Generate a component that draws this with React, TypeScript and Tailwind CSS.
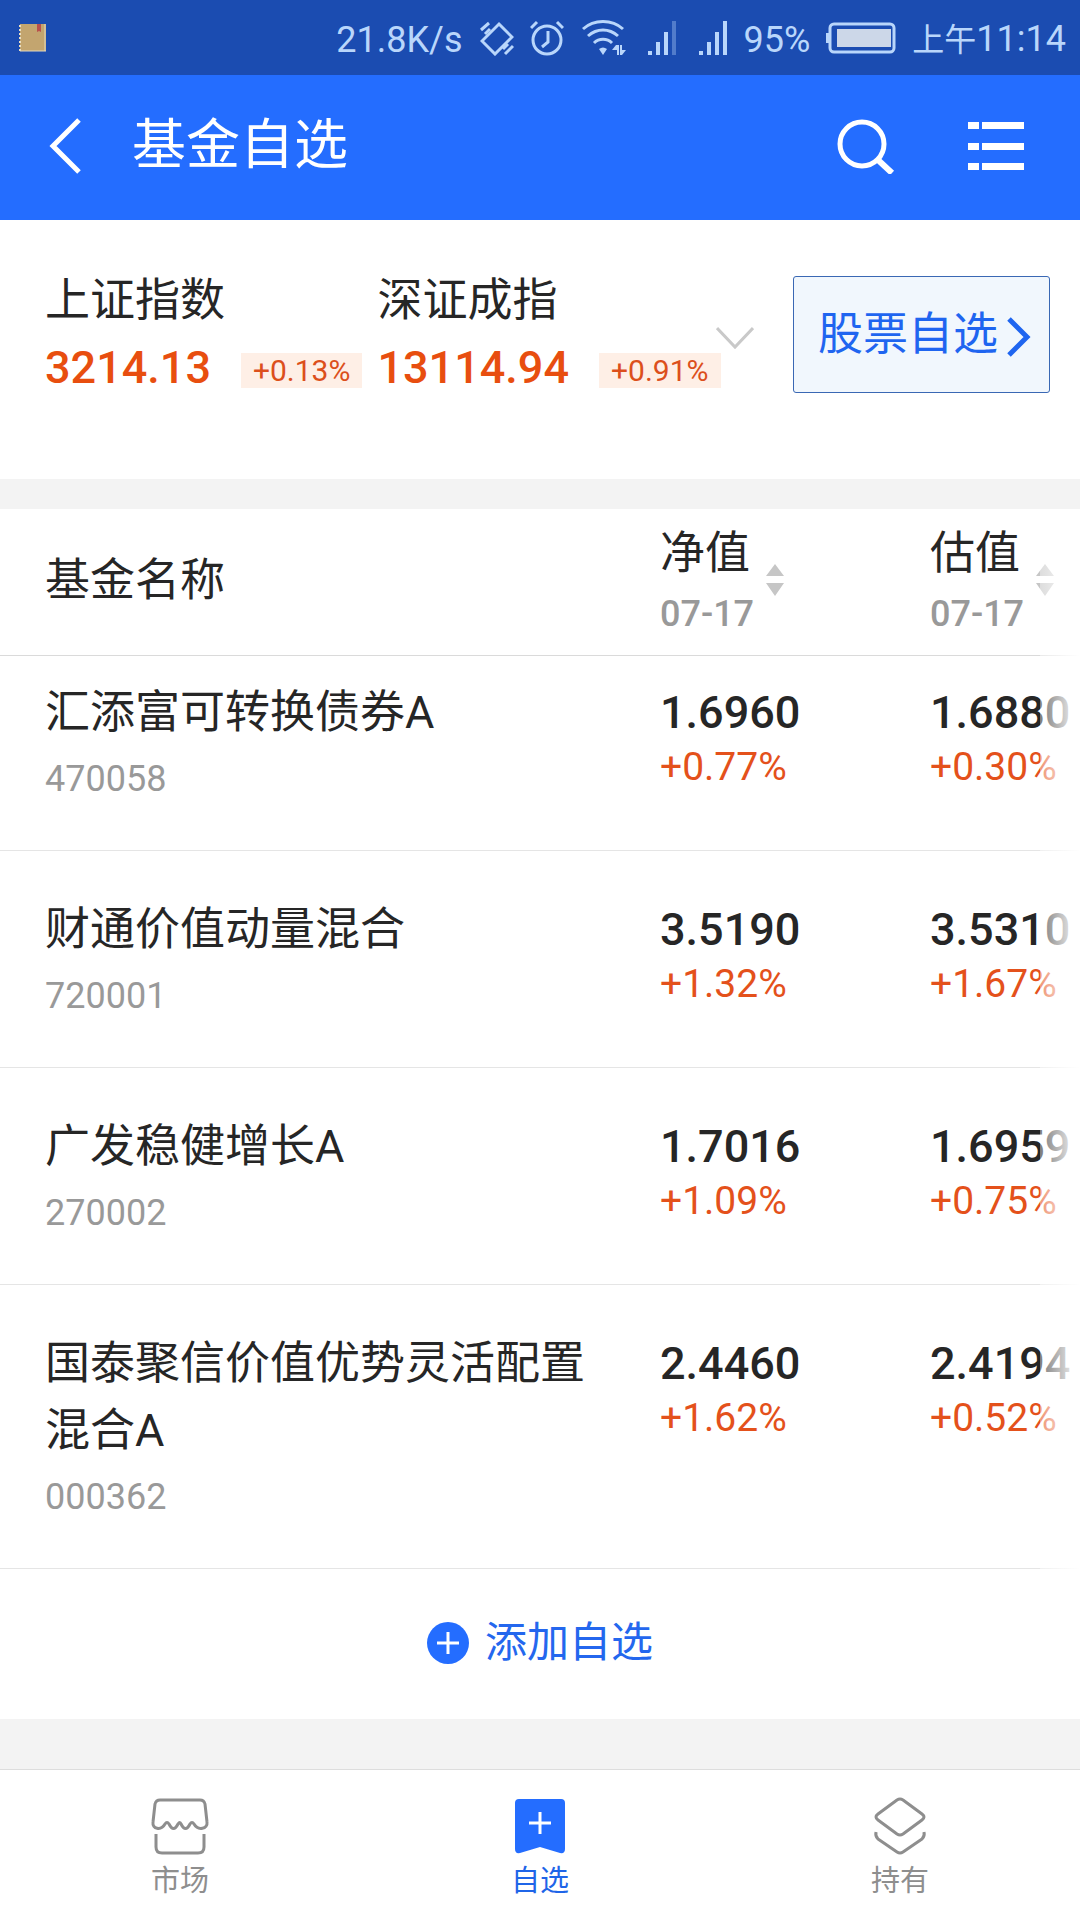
import React from "react";

type Fund = {
  name: string;
  code: string;
  net: string;
  netChange: string;
  estimate: string;
  estimateChange: string;
};

const funds: Fund[] = [
  { name: "汇添富可转换债券A", code: "470058", net: "1.6960", netChange: "+0.77%", estimate: "1.6880", estimateChange: "+0.30%" },
  { name: "财通价值动量混合", code: "720001", net: "3.5190", netChange: "+1.32%", estimate: "3.5310", estimateChange: "+1.67%" },
  { name: "广发稳健增长A", code: "270002", net: "1.7016", netChange: "+1.09%", estimate: "1.6959", estimateChange: "+0.75%" },
  { name: "国泰聚信价值优势灵活配置混合A", code: "000362", net: "2.4460", netChange: "+1.62%", estimate: "2.4194", estimateChange: "+0.52%" },
];

const indices = [
  { name: "上证指数", value: "3214.13", change: "+0.13%" },
  { name: "深证成指", value: "13114.94", change: "+0.91%" },
];

function NotebookIcon() {
  return (
    <svg width="30" height="30" viewBox="0 0 30 30" aria-hidden="true">
      <rect x="3" y="1" width="26" height="27" fill="#c3a56f" />
      <path d="M3 2v26" stroke="#eadfc4" strokeWidth="2" strokeDasharray="2 2" />
      <path d="M3 28h26" stroke="#e3d8bd" strokeWidth="1" fill="none" />
      <path d="M28 1v27" stroke="#e3d8bd" strokeWidth="1" />
      <path d="M20 1h4v8l-2-1-2 1z" fill="#b9504c" />
    </svg>
  );
}

function RotateIcon() {
  return (
    <svg width="34" height="36" viewBox="0 0 34 36" fill="none" stroke="currentColor" aria-hidden="true">
      <path d="M19 4 32 17 15 34 2 21Z" strokeWidth="3" />
      <path d="M1 10 9 3M5 14l5-5M25 34l8-8M23 29l5-5" strokeWidth="3" />
    </svg>
  );
}

function AlarmIcon() {
  return (
    <svg width="34" height="36" viewBox="0 0 34 36" fill="none" stroke="currentColor" strokeWidth="3" aria-hidden="true">
      <circle cx="17" cy="20" r="14" />
      <path d="M18 11v11l-6 5M1 8l6-6M33 8l-6-6" />
    </svg>
  );
}

function WifiIcon() {
  return (
    <svg width="44" height="36" viewBox="0 0 44 36" fill="none" stroke="currentColor" strokeWidth="3" aria-hidden="true">
      <path d="M1 9C12-1 30-1 41 9M6 16C15 8 27 8 36 16M12 23c5-5 13-5 18 0" />
      <path d="m21 35-4-6q4-3 8 0z" fill="currentColor" stroke="none" />
      <path d="M35 35v-5h-5l4-5h3v10zM38 25h2v5h4l-4 5h-2z" fill="currentColor" stroke="none" />
    </svg>
  );
}

function SignalIcon({ full }: { full: boolean }) {
  return (
    <svg width="28" height="36" viewBox="0 0 28 36" fill="currentColor" aria-hidden="true">
      <rect x="0" y="31" width="4" height="4" />
      <rect x="8" y="22" width="4" height="13" />
      <rect x="16" y="12" width="4" height="23" />
      <rect x="24" y="1" width="4" height="34" opacity={full ? 1 : 0.35} />
    </svg>
  );
}

function BatteryIcon() {
  return (
    <svg width="70" height="32" viewBox="0 0 70 32" aria-hidden="true">
      <rect x="0" y="11" width="4" height="10" fill="#b9d6fb" />
      <rect x="4" y="2" width="64" height="28" rx="4" fill="none" stroke="#b9d6fb" strokeWidth="3" />
      <rect x="11" y="7" width="54" height="18" fill="#ccd7e8" />
    </svg>
  );
}

function StatusBar() {
  return (
    <div className="flex h-[75px] items-center justify-between bg-[#1b4cb1] pl-[17px] pr-[14px] text-[36px] leading-[42px] text-[#b9d6fb]">
      <NotebookIcon />
      <div className="flex items-center">
        <span className="pt-1">21.8K/s</span>
        <span className="ml-[18px]"><RotateIcon /></span>
        <span className="ml-4"><AlarmIcon /></span>
        <span className="ml-[18px]"><WifiIcon /></span>
        <span className="ml-[22px]"><SignalIcon full={false} /></span>
        <span className="ml-[23px]"><SignalIcon full /></span>
        <span className="ml-4 pt-1">95%</span>
        <span className="ml-4"><BatteryIcon /></span>
        <span className="ml-4 pt-1 whitespace-nowrap"><span className="text-[32px]">上午</span>11:14</span>
      </div>
    </div>
  );
}

function Header() {
  return (
    <header className="flex h-[145px] items-center bg-[#246dff] pb-[3px] pl-[48px] pr-[54px] text-white">
      <button type="button" aria-label="返回">
        <svg width="34" height="56" viewBox="0 0 34 56" fill="none" stroke="currentColor" strokeWidth="5" className="block">
          <path d="M31 2 5 28l26 26" />
        </svg>
      </button>
      <h1 className="ml-[50px] flex-1 text-[54px] leading-[72px] font-normal">基金自选</h1>
      <button type="button" aria-label="搜索">
        <svg width="60" height="56" viewBox="0 0 60 56" fill="none" stroke="currentColor" strokeWidth="5" className="block">
          <circle cx="26" cy="26" r="22" />
          <path d="m41 41 15 14" strokeWidth="6" />
        </svg>
      </button>
      <button type="button" aria-label="菜单" className="ml-[72px]">
        <svg width="58" height="50" viewBox="0 0 58 50" fill="currentColor" className="block">
          <path d="M0 1h11v7H0zM14 1h42v7H14zM0 22h11v7H0zM14 22h42v7H14zM0 42h11v7H0zM14 42h42v7H14z" />
        </svg>
      </button>
    </header>
  );
}

function IndexPanel() {
  return (
    <section className="flex h-[259px] items-start bg-white pt-14 pr-[30px] pl-[45px]">
      <div className="flex gap-[15px] pt-px">
        {indices.map((index) => (
          <div key={index.name}>
            <div className="text-[45px] leading-[48px] text-[#262626]">{index.name}</div>
            <div className="mt-5 flex items-center gap-[30px] text-[#e84e0f]">
              <span className="text-[45px] leading-[46px] font-medium">{index.value}</span>
              <span className="mt-1 bg-[#feefe6] px-3 text-[30px] leading-[35px] text-[#dc4f1c]">{index.change}</span>
            </div>
          </div>
        ))}
      </div>
      <button type="button" aria-label="展开指数" className="mt-[50px] -ml-[5px]">
        <svg width="38" height="24" viewBox="0 0 38 24" fill="none" stroke="#c9c9c9" strokeWidth="3" className="block">
          <path d="m1 2 18 19L37 2" />
        </svg>
      </button>
      <a href="#stocks" className="ml-auto flex h-[117px] w-[257px] items-center gap-[9px] rounded-[3px] border border-[#3a68b4] bg-[#f1f7fd] pl-6 text-[45px] leading-[60px] whitespace-nowrap text-[#1f65f0]">
        股票自选
        <svg width="24" height="40" viewBox="0 0 24 40" fill="none" stroke="currentColor" strokeWidth="5" className="mt-1 shrink-0">
          <path d="m2 2 18 18L2 38" />
        </svg>
      </a>
    </section>
  );
}

function SortHeader({ label, date }: { label: string; date: string }) {
  return (
    <button type="button" className="flex items-center gap-3 text-left">
      <span>
        <span className="block text-[45px] leading-[60px] font-normal text-[#262626]">{label}</span>
        <span className="block text-[36px] leading-[60px] font-medium text-[#999999]">{date}</span>
      </span>
      <svg width="18" height="34" viewBox="0 0 18 34" fill="#c6c6c6" aria-hidden="true" className="mb-2">
        <path d="M9 1l9 12H0zM9 33l9-13H0z" />
      </svg>
    </button>
  );
}

function ValueCell({ value, change }: { value: string; change: string }) {
  return (
    <>
      <div className="text-[45px] leading-[67px] font-medium text-[#262626]">{value}</div>
      <div className="text-[39px] leading-[42px] text-[#e4511b]">{change}</div>
    </>
  );
}

function FundTable() {
  return (
    <section className="relative overflow-hidden bg-white">
      <table className="w-full table-fixed border-collapse">
        <colgroup>
          <col />
          <col className="w-[270px]" />
          <col className="w-[150px]" />
        </colgroup>
        <thead>
          <tr className="border-b border-[#dadada]">
            <th scope="col" className="pt-3 pb-[14px] pl-[45px] text-left text-[45px] leading-[60px] font-normal text-[#262626]">基金名称</th>
            <th scope="col" className="pt-[15px] pb-[11px] text-left"><SortHeader label="净值" date="07-17" /></th>
            <th scope="col" className="pt-[15px] pb-[11px] text-left"><SortHeader label="估值" date="07-17" /></th>
          </tr>
        </thead>
        <tbody>
          {funds.map((fund) => (
            <tr key={fund.code} className="group border-b border-[#e5e5e5] align-top">
              <td className="pt-[45px] pr-[70px] pb-[37px] pl-[45px] group-first:pt-[23px]">
                <div className="text-[45px] leading-[67px] text-[#262626]">{fund.name}</div>
                <div className="text-[36px] leading-[67px] text-[#999999]">{fund.code}</div>
              </td>
              <td className="pt-[45px] group-first:pt-[23px]"><ValueCell value={fund.net} change={fund.netChange} /></td>
              <td className="pt-[45px] group-first:pt-[23px]"><ValueCell value={fund.estimate} change={fund.estimateChange} /></td>
            </tr>
          ))}
        </tbody>
      </table>
      <div className="pointer-events-none absolute inset-y-0 right-0 w-10 bg-linear-to-r from-white/40 to-white" />
    </section>
  );
}

function MarketIcon() {
  return (
    <svg width="60" height="60" viewBox="0 0 60 60" fill="none" stroke="currentColor" strokeWidth="3" strokeLinejoin="round" aria-hidden="true">
      <path d="M10 4h40q4 0 5 4l2 18c1 7-9 9-13 2q-2-3-4 0c-3 6-6 6-9 0q-1-3-3 0c-3 6-6 6-9 0q-2-3-4 0C11 35 2 33 3 26L5 8q1-4 5-4z" />
      <path d="M6 38v13q0 6 6 6h36q6 0 6-6V38" />
    </svg>
  );
}

function BookmarkIcon() {
  return (
    <svg width="60" height="60" viewBox="0 0 60 60" aria-hidden="true">
      <path d="M9 3h42q4 0 4 4v46q0 5-5 4l-20-6-20 6q-5 1-5-4V7q0-4 4-4z" fill="#246dff" />
      <path d="M30 16v22M19 27h22" stroke="white" strokeWidth="3" />
    </svg>
  );
}

function LayersIcon() {
  return (
    <svg width="60" height="60" viewBox="0 0 60 60" fill="none" stroke="currentColor" strokeWidth="3" strokeLinejoin="round" aria-hidden="true">
      <path d="M27 4q3-2 6 0l19 14q4 3 0 6L33 38q-3 2-6 0L8 24q-4-3 0-6z" />
      <path d="M6 36q-1 4 2 7l19 13q3 2 6 0l19-13q3-3 2-7" />
    </svg>
  );
}

function BottomNav() {
  return (
    <nav className="grid h-[151px] grid-cols-3 border-t border-[#dddddd] bg-white text-[29px] leading-[42px] text-[#8e8e8e]">
      <a href="#market" className="flex flex-col items-center gap-1 pt-[26px]"><MarketIcon />市场</a>
      <a href="#favorites" aria-current="page" className="flex flex-col items-center gap-1 pt-[26px] text-[#1f65e8]"><BookmarkIcon />自选</a>
      <a href="#holdings" className="flex flex-col items-center gap-1 pt-[26px]"><LayersIcon />持有</a>
    </nav>
  );
}

export default function App() {
  return (
    <div className="flex min-h-screen flex-col bg-[#f3f3f3] font-['Roboto','Noto_Sans_CJK_SC',sans-serif]">
      <StatusBar />
      <Header />
      <main className="flex-1">
        <IndexPanel />
        <div className="mt-[30px]">
          <FundTable />
        </div>
        <div className="flex justify-center bg-white pt-11 pb-[46px]">
          <button type="button" className="flex items-center gap-4 text-[42px] leading-[60px] text-[#2467ee]">
            <svg width="42" height="42" viewBox="0 0 42 42" aria-hidden="true">
              <circle cx="21" cy="21" r="21" fill="#246dff" />
              <path d="M21 10v22M10 21h22" stroke="white" strokeWidth="3" />
            </svg>
            添加自选
          </button>
        </div>
      </main>
      <BottomNav />
    </div>
  );
}
